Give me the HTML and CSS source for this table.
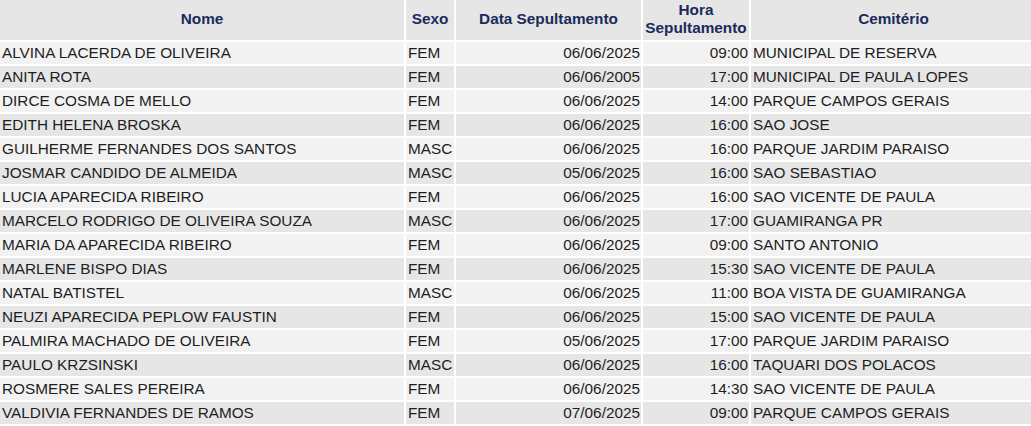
FILE: index.html
```html
<!DOCTYPE html>
<html lang="pt">
<head>
<meta charset="utf-8">
<title>Sepultamentos</title>
<link rel="stylesheet" href="styles.css">
</head>
<body>
<table class="grid">
  <colgroup>
    <col class="c-nome">
    <col class="c-sexo">
    <col class="c-data">
    <col class="c-hora">
    <col class="c-cem">
  </colgroup>
  <thead>
    <tr>
      <th>Nome</th>
      <th>Sexo</th>
      <th>Data Sepultamento</th>
      <th>Hora Sepultamento</th>
      <th>Cemitério</th>
    </tr>
  </thead>
  <tbody>
    <tr><td>ALVINA LACERDA DE OLIVEIRA</td><td>FEM</td><td class="r">06/06/2025</td><td class="r">09:00</td><td>MUNICIPAL DE RESERVA</td></tr>
    <tr><td>ANITA ROTA</td><td>FEM</td><td class="r">06/06/2005</td><td class="r">17:00</td><td>MUNICIPAL DE PAULA LOPES</td></tr>
    <tr><td>DIRCE COSMA DE MELLO</td><td>FEM</td><td class="r">06/06/2025</td><td class="r">14:00</td><td>PARQUE CAMPOS GERAIS</td></tr>
    <tr><td>EDITH HELENA BROSKA</td><td>FEM</td><td class="r">06/06/2025</td><td class="r">16:00</td><td>SAO JOSE</td></tr>
    <tr><td>GUILHERME FERNANDES DOS SANTOS</td><td>MASC</td><td class="r">06/06/2025</td><td class="r">16:00</td><td>PARQUE JARDIM PARAISO</td></tr>
    <tr><td>JOSMAR CANDIDO DE ALMEIDA</td><td>MASC</td><td class="r">05/06/2025</td><td class="r">16:00</td><td>SAO SEBASTIAO</td></tr>
    <tr><td>LUCIA APARECIDA RIBEIRO</td><td>FEM</td><td class="r">06/06/2025</td><td class="r">16:00</td><td>SAO VICENTE DE PAULA</td></tr>
    <tr><td>MARCELO RODRIGO DE OLIVEIRA SOUZA</td><td>MASC</td><td class="r">06/06/2025</td><td class="r">17:00</td><td>GUAMIRANGA PR</td></tr>
    <tr><td>MARIA DA APARECIDA RIBEIRO</td><td>FEM</td><td class="r">06/06/2025</td><td class="r">09:00</td><td>SANTO ANTONIO</td></tr>
    <tr><td>MARLENE BISPO DIAS</td><td>FEM</td><td class="r">06/06/2025</td><td class="r">15:30</td><td>SAO VICENTE DE PAULA</td></tr>
    <tr><td>NATAL BATISTEL</td><td>MASC</td><td class="r">06/06/2025</td><td class="r">11:00</td><td>BOA VISTA DE GUAMIRANGA</td></tr>
    <tr><td>NEUZI APARECIDA PEPLOW FAUSTIN</td><td>FEM</td><td class="r">06/06/2025</td><td class="r">15:00</td><td>SAO VICENTE DE PAULA</td></tr>
    <tr><td>PALMIRA MACHADO DE OLIVEIRA</td><td>FEM</td><td class="r">05/06/2025</td><td class="r">17:00</td><td>PARQUE JARDIM PARAISO</td></tr>
    <tr><td>PAULO KRZSINSKI</td><td>MASC</td><td class="r">06/06/2025</td><td class="r">16:00</td><td>TAQUARI DOS POLACOS</td></tr>
    <tr><td>ROSMERE SALES PEREIRA</td><td>FEM</td><td class="r">06/06/2025</td><td class="r">14:30</td><td>SAO VICENTE DE PAULA</td></tr>
    <tr><td>VALDIVIA FERNANDES DE RAMOS</td><td>FEM</td><td class="r">07/06/2025</td><td class="r">09:00</td><td>PARQUE CAMPOS GERAIS</td></tr>
  </tbody>
</table>
</body>
</html>
```

FILE: styles.css
```css
html, body {
  margin: 0;
  padding: 0;
  background: #ffffff;
  overflow: hidden;
}

.grid {
  border-collapse: separate;
  border-spacing: 2px;
  table-layout: fixed;
  width: 1040px;
  margin: -2px 0 0 -2px;
  font-family: "Liberation Sans", Arial, sans-serif;
  font-size: 15.33px;
  color: #1e1e1e;
}

.c-nome { width: 404px; }
.c-sexo { width: 48px; }
.c-data { width: 185px; }
.c-hora { width: 106px; }
.c-cem { width: auto; }

.grid th {
  background: #e6e6e6;
  color: #1a2a5c;
  font-weight: bold;
  font-size: 15.33px;
  line-height: 18px;
  height: 36px;
  padding: 1px 0 3px;
  text-align: center;
  vertical-align: middle;
}

.grid td {
  height: 21px;
  padding: 0 2px 1px;
  line-height: 17px;
  white-space: nowrap;
  vertical-align: middle;
}

.grid tbody tr:nth-child(odd) td { background: #f2f2f2; }
.grid tbody tr:nth-child(even) td { background: #e6e6e6; }

.grid td.r { text-align: right; padding-right: 1px; }
```
